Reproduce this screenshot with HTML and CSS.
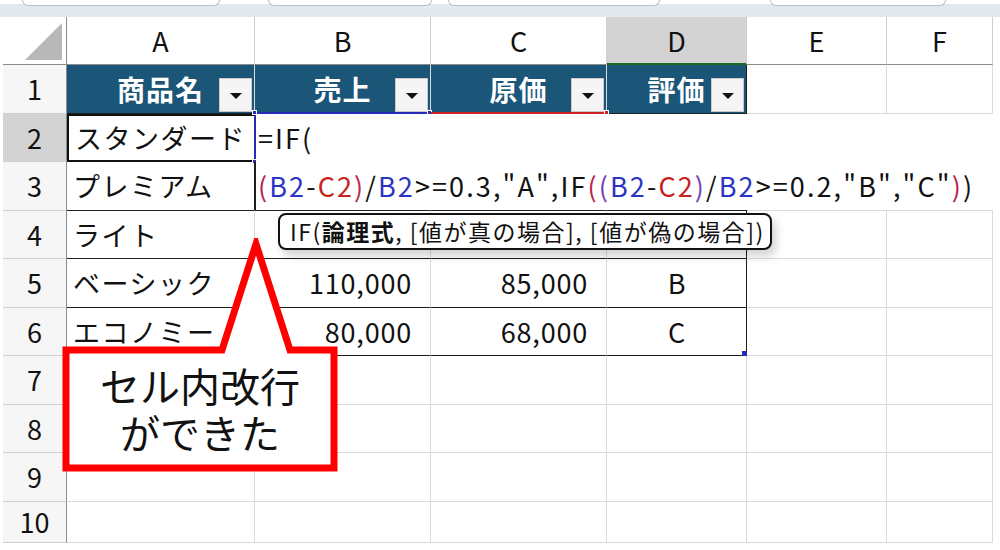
FILE: index.html
```
<!DOCTYPE html>
<html lang="ja">
<head>
  <meta charset="UTF-8">
  <title>セル内改行</title>
  <link rel="stylesheet" href="styles.css">
</head>
<body>
  <div class="topbar">
    <span class="tab tab1"></span>
    <span class="tab tab2"></span>
    <span class="tab tab3"></span>
    <span class="tab tab4"></span>
  </div>

  <div class="sheet">
    <!-- column headers -->
    <div class="cell corner"><span class="corner_tri"></span></div>
    <div class="cell ch">A</div>
    <div class="cell ch">B</div>
    <div class="cell ch">C</div>
    <div class="cell ch ch_on">D</div>
    <div class="cell ch">E</div>
    <div class="cell ch">F</div>

    <!-- 1 -->
    <div class="cell rh">1</div>
    <div class="cell t th">商品名<span class="filter"></span></div>
    <div class="cell t th">売上<span class="filter"></span></div>
    <div class="cell t th">原価<span class="filter"></span></div>
    <div class="cell t th tr">評価<span class="filter"></span></div>
    <div class="cell"></div>
    <div class="cell"></div>

    <!-- 2 -->
    <div class="cell rh rh_on">2</div>
    <div class="cell t txt active">スタンダード</div>
    <div class="cell t"></div>
    <div class="cell t"></div>
    <div class="cell t tr"></div>
    <div class="cell"></div>
    <div class="cell"></div>

    <!-- 3 -->
    <div class="cell rh">3</div>
    <div class="cell t txt">プレミアム</div>
    <div class="cell t"></div>
    <div class="cell t"></div>
    <div class="cell t tr"></div>
    <div class="cell"></div>
    <div class="cell"></div>

    <!-- 4 -->
    <div class="cell rh">4</div>
    <div class="cell t txt">ライト</div>
    <div class="cell t"></div>
    <div class="cell t"></div>
    <div class="cell t tr"></div>
    <div class="cell"></div>
    <div class="cell"></div>

    <!-- 5 -->
    <div class="cell rh">5</div>
    <div class="cell t txt">ベーシック</div>
    <div class="cell t num">110,000</div>
    <div class="cell t num">85,000</div>
    <div class="cell t tr mid">B</div>
    <div class="cell"></div>
    <div class="cell"></div>

    <!-- 6 -->
    <div class="cell rh">6</div>
    <div class="cell t txt">エコノミー</div>
    <div class="cell t num">80,000</div>
    <div class="cell t num">68,000</div>
    <div class="cell t tr mid">C</div>
    <div class="cell"></div>
    <div class="cell"></div>

    <!-- 7 -->
    <div class="cell rh">7</div>
    <div class="cell"></div><div class="cell"></div><div class="cell"></div>
    <div class="cell"></div><div class="cell"></div><div class="cell"></div>

    <!-- 8 -->
    <div class="cell rh">8</div>
    <div class="cell"></div><div class="cell"></div><div class="cell"></div>
    <div class="cell"></div><div class="cell"></div><div class="cell"></div>

    <!-- 9 -->
    <div class="cell rh">9</div>
    <div class="cell"></div><div class="cell"></div><div class="cell"></div>
    <div class="cell"></div><div class="cell"></div><div class="cell"></div>

    <!-- 10 -->
    <div class="cell rh">10</div>
    <div class="cell"></div><div class="cell"></div><div class="cell"></div>
    <div class="cell"></div><div class="cell"></div><div class="cell"></div>

    <!-- range marks while editing -->
    <span class="ref_b ref_b_top"></span>
    <span class="ref_b ref_b_left"></span>
    <span class="dot dot_b1"></span>
    <span class="dot dot_b2"></span>
    <span class="dot dot_b3"></span>
    <span class="ref_c"></span>
    <span class="dot dot_c1"></span>
    <span class="dot dot_end"></span>

    <!-- in-cell editor -->
    <div class="editor">
      <p class="edit_line">=IF(</p>
      <p class="edit_line"><span class="p1">(</span><span class="rb">B2</span>-<span class="rc">C2</span><span class="p1">)</span>/<span class="rb">B2</span>&gt;=0.3,"A",IF<span class="p1">(</span><span class="p2">(</span><span class="rb">B2</span>-<span class="rc">C2</span><span class="p2">)</span>/<span class="rb">B2</span>&gt;=0.2,"B","C"<span class="p1">)</span>)</p>
    </div>

    <div class="tip">IF(<b>論理式</b>, [値が真の場合], [値が偽の場合])</div>

    <div class="callout">
      <svg width="284" height="258" viewBox="0 0 284 258">
        <path d="M6,112 L162,112 L196,6 L230,112 L274,112 L274,230 L6,230 Z" fill="#fff" stroke="#ff0000" stroke-width="7" stroke-linejoin="miter" stroke-miterlimit="6"/>
      </svg>
      <div class="callout_text">
        <p class="callout_line">セル内改行</p>
        <p class="callout_line">ができた</p>
      </div>
    </div>
  </div>
</body>
</html>
```

FILE: styles.css
```
*{margin:0;padding:0;box-sizing:border-box;}
body{background:#fff;font-family:"Noto Sans CJK JP","Noto Sans",sans-serif;color:#111;width:1000px;height:550px;overflow:hidden;}

.topbar{height:17px;background:#e3eaee;position:relative;border-top:4px solid #fff;}
.tab{position:absolute;top:-6px;height:8px;border:1px solid #b9bfc3;border-top:0;border-radius:0 0 6px 6px;background:#fff;}
.tab1{left:22px;width:198px;}
.tab2{left:268px;width:164px;}
.tab3{left:448px;width:212px;}
.tab4{left:770px;width:176px;}

.sheet{position:relative;margin-left:3px;width:990px;display:grid;grid-template-columns:64px 188px 176px 176px 140px 140px 106px;grid-template-rows:48px repeat(9,48.5px) 41.5px;}
.cell{border-right:1px solid #dadada;border-bottom:1px solid #dadada;font-size:27px;display:flex;align-items:center;white-space:nowrap;position:relative;}

.corner{background:#fff;border-right:1px solid #8c8c8c;border-bottom:1px solid #8c8c8c;}
.corner_tri{position:absolute;right:4px;bottom:4px;width:0;height:0;border-style:solid;border-width:0 0 37px 37px;border-color:transparent transparent #b8b8b8 transparent;}
.ch{justify-content:center;background:#fff;border-bottom:1px solid #8c8c8c;border-right:1px solid #cfcfcf;font-size:27px;color:#111;}
.ch_on{background:#d3d3d3;border-bottom:2px solid #1d6b25;}
.rh{justify-content:center;background:#f6f6f6;border-right:1px solid #8c8c8c;border-bottom:1px solid #cfcfcf;font-size:27px;}
.rh_on{background:#d3d3d3;}

.t{border-bottom:1px solid #1e1e1e;}
.tr{border-right:1px solid #1e1e1e;}
.th{background:#1b5678;color:#fff;font-weight:bold;justify-content:center;font-size:28px;letter-spacing:1px;}
.filter{position:absolute;right:2px;bottom:1px;width:33px;height:34px;background:#f5f5f5;border:1px solid #c9c9c9;}
.filter::after{content:"";position:absolute;left:10px;top:14px;border-style:solid;border-width:6px 6px 0 6px;border-color:#111 transparent transparent transparent;}

.txt{padding-left:6px;letter-spacing:1.5px;}
.num{justify-content:flex-end;padding-right:18px;letter-spacing:0.8px;}
.mid{justify-content:center;}
.active{border:2px solid #111;border-right:0;}

.ref_b,.ref_c{position:absolute;}
.ref_b{background:#2a2ab8;}
.ref_b_top{left:252px;top:95px;width:176px;height:2px;}
.ref_b_left{left:251px;top:96px;width:2px;height:48px;}
.ref_c{left:428px;top:95px;width:176px;height:2px;background:#cc1f1f;}
.dot{position:absolute;width:5px;height:5px;background:#2a2ab8;border:1px solid #fff;}
.dot_b1{left:249px;top:93px;}
.dot_b2{left:424px;top:93px;}
.dot_b3{left:249px;top:142px;}
.dot_c1{left:601px;top:93px;background:#cc1f1f;}
.dot_end{left:739px;top:334px;border:0;}

.editor{position:absolute;left:253px;top:97px;width:737px;height:96px;background:#fff;}
.editor::before{content:"";position:absolute;left:-2px;top:48px;width:2px;height:48px;background:#1e1e1e;}
.edit_line{height:48px;line-height:48px;font-size:27px;padding-left:2px;letter-spacing:2.1px;color:#111;}
.rb{color:#2b35c4;}
.rc{color:#c8221e;}
.p1{color:#b8264e;}
.p2{color:#7a3cb4;}

.tip{position:absolute;left:275px;top:196px;width:494px;height:37px;background:#fff;border:2px solid #111;border-radius:8px;font-size:23px;line-height:33px;padding-left:10px;letter-spacing:1.5px;white-space:nowrap;box-shadow:4px 6px 10px rgba(0,0,0,0.18);}
.tip b{font-weight:bold;}

.callout{position:absolute;left:57px;top:221px;width:284px;height:258px;}
.callout svg{display:block;}
.callout_text{position:absolute;left:6px;top:127px;width:268px;display:flex;flex-direction:column;align-items:center;gap:7px;color:#111;}
.callout_line{font-size:40px;line-height:40px;height:40px;}
```
